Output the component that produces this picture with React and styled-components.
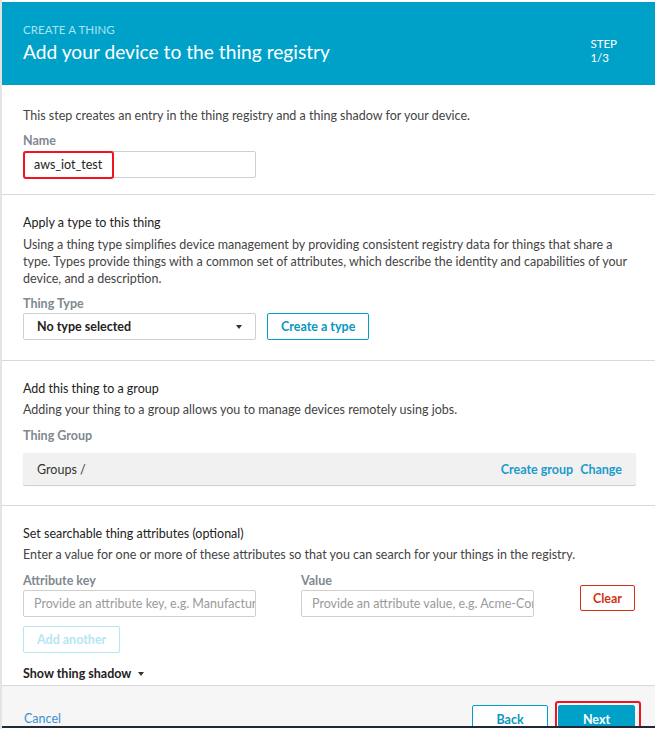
import React from 'react';
import styled, { createGlobalStyle } from 'styled-components';

const GlobalStyle = createGlobalStyle`
  html, body {
    margin: 0;
    padding: 0;
    background: #fff;
  }
  body {
    font-family: 'Lato', 'Liberation Sans', sans-serif;
    color: #333;
  }
`;

const Page = styled.div`
  width: 655px;
  height: 729px;
  overflow: hidden;
  box-sizing: border-box;
  padding-top: 2px;
  border-left: 2px solid #e4e4e4;
  display: flex;
  flex-direction: column;
`;

const Header = styled.div`
  background: #00a1c9;
  height: 83px;
  flex-shrink: 0;
  box-sizing: border-box;
  padding: 21px 21px 0 21px;
  display: flex;
  justify-content: space-between;
`;

const Eyebrow = styled.div`
  font-size: 11.5px;
  color: #a6e4f4;
  letter-spacing: 0.1px;
`;

const Title = styled.h1`
  margin: 4px 0 0;
  font-size: 19.2px;
  font-weight: 400;
  color: #fff;
`;

const Step = styled.div`
  margin: 14px 17px 0 0;
  color: #fff;
  font-size: 11.5px;
  line-height: 14px;
`;

const Section = styled.div`
  flex-shrink: 0;
  padding: ${({ $pad }) => $pad || '21px 21px 16px'};
  border-bottom: 1px solid #d9d9d9;
`;

const Heading = styled.div`
  font-size: 12.5px;
  line-height: 17px;
  color: #222;
`;

const Text = styled.p`
  margin: ${({ $m }) => $m || '4px 0 0'};
  font-size: 12.5px;
  line-height: 17px;
  color: #444;
  max-width: ${({ $w }) => $w || 'none'};
`;

const Label = styled.div`
  margin-top: ${({ $mt }) => $mt || '9px'};
  font-size: 12.5px;
  font-weight: 700;
  color: #808890;
  line-height: 16px;
`;

const Row = styled.div`
  display: flex;
  align-items: ${({ $align }) => $align || 'center'};
  gap: ${({ $gap }) => $gap || '11px'};
  margin-top: ${({ $mt }) => $mt || '4px'};
`;

const FieldWrap = styled.div`
  position: relative;
  width: 233px;
`;

const Input = styled.div`
  box-sizing: border-box;
  width: 233px;
  height: 27px;
  margin-top: ${({ $mt }) => $mt || '0'};
  border: 1px solid #cfcfcf;
  border-radius: 2px;
  padding: 0 10px;
  display: flex;
  align-items: center;
  font-size: 12.5px;
  color: ${({ $placeholder }) => ($placeholder ? '#9a9a9a' : '#222')};
  white-space: nowrap;
  overflow: hidden;
  background: #fff;
`;

const Highlight = styled.div`
  position: absolute;
  left: ${({ $l }) => $l};
  top: ${({ $t }) => $t};
  width: ${({ $w }) => $w};
  height: ${({ $h }) => $h};
  border: 2px solid #f0141e;
  border-radius: 3px;
  box-sizing: border-box;
  pointer-events: none;
`;

const Select = styled(Input)`
  justify-content: space-between;
  padding: 0 13px;
  font-weight: 700;
  color: #222;
`;

const Caret = styled.span`
  width: 0;
  height: 0;
  border-left: 3px solid transparent;
  border-right: 3px solid transparent;
  border-top: 4px solid #333;
`;

const Button = styled.button`
  box-sizing: border-box;
  height: ${({ $h }) => $h || '27px'};
  width: ${({ $w }) => $w || 'auto'};
  padding: 0 ${({ $px }) => $px || '12px'};
  margin-left: ${({ $ml }) => $ml || '0'};
  margin-top: ${({ $mt }) => $mt || '0'};
  background: ${({ $primary }) => ($primary ? '#00a1c9' : '#fff')};
  border: 1px solid ${({ $color }) => $color || '#00a1c9'};
  border-radius: 2px;
  color: ${({ $primary, $text }) => ($primary ? '#fff' : $text || '#0a97c2')};
  font-family: inherit;
  font-size: 12.5px;
  font-weight: 700;
  cursor: pointer;
`;

const GroupBar = styled.div`
  margin-top: 9px;
  height: 32px;
  background: #f1f1f1;
  border-radius: 2px;
  box-shadow: 0 1px 1px rgba(0, 0, 0, 0.2);
  display: flex;
  align-items: center;
  justify-content: space-between;
  padding: 0 14px;
  font-size: 12.5px;
`;

const Links = styled.div`
  display: flex;
  gap: 7px;
`;

const Link = styled.span`
  color: ${({ $color }) => $color || '#1b9bcb'};
  font-weight: ${({ $weight }) => $weight || 700};
  font-size: 12.5px;
  line-height: ${({ $lh }) => $lh || 'normal'};
  margin-top: ${({ $mt }) => $mt || '0'};
`;

const Col = styled.div`
  display: flex;
  flex-direction: column;
  margin-left: ${({ $ml }) => $ml || '0'};
`;

const Toggle = styled.div`
  margin-top: 13px;
  display: flex;
  align-items: center;
  gap: 7px;
  font-size: 12.5px;
  font-weight: 700;
  color: #222;
`;

const Footer = styled.div`
  background: #f6f6f6;
  height: 40px;
  flex-shrink: 0;
  padding: 19px 20px 0 22px;
  box-sizing: border-box;
  display: flex;
  justify-content: space-between;
  align-items: flex-start;
  overflow: hidden;
`;

const FooterButtons = styled.div`
  display: flex;
  gap: 10px;
`;

const NextWrap = styled.div`
  position: relative;
`;

const BottomBar = styled.div`
  height: 2px;
  flex-shrink: 0;
  background: #1f2a36;
`;

export default function App() {
  return (
    <>
      <GlobalStyle />
      <Page>
        <Header>
          <div>
            <Eyebrow>CREATE A THING</Eyebrow>
            <Title>Add your device to the thing registry</Title>
          </div>
          <Step>
            STEP
            <br />
            1/3
          </Step>
        </Header>

        <Section $pad="22px 21px 16px">
          <Text $m="0">This step creates an entry in the thing registry and a thing shadow for your device.</Text>
          <Label $mt="9px">Name</Label>
          <Row $mt="2px">
            <FieldWrap>
              <Input>aws_iot_test</Input>
              <Highlight $l="0" $t="0" $w="91px" $h="28px" />
            </FieldWrap>
          </Row>
        </Section>

        <Section $pad="19px 21px 20px">
          <Heading>Apply a type to this thing</Heading>
          <Text $w="610px" $m="5px 0 0">
            Using a thing type simplifies device management by providing consistent registry data for things that share a
            type. Types provide things with a common set of attributes, which describe the identity and capabilities of your
            device, and a description.
          </Text>
          <Label $mt="9px">Thing Type</Label>
          <Row $mt="1px">
            <Select>
              No type selected
              <Caret />
            </Select>
            <Button $px="13px">Create a type</Button>
          </Row>
        </Section>

        <Section $pad="19px 19px 20px 21px">
          <Heading>Add this thing to a group</Heading>
          <Text>Adding your thing to a group allows you to manage devices remotely using jobs.</Text>
          <Label $mt="10px">Thing Group</Label>
          <GroupBar>
            <span>Groups /</span>
            <Links>
              <Link>Create group</Link>
              <Link>Change</Link>
            </Links>
          </GroupBar>
        </Section>

        <Section $pad="19px 20px 4px 21px">
          <Heading>Set searchable thing attributes (optional)</Heading>
          <Text>Enter a value for one or more of these attributes so that you can search for your things in the registry.</Text>
          <Row $align="flex-start" $gap="0" $mt="10px">
            <Col>
              <Label $mt="0">Attribute key</Label>
              <Input $placeholder $mt="1px">Provide an attribute key, e.g. Manufacturer</Input>
            </Col>
            <Col $ml="45px">
              <Label $mt="0">Value</Label>
              <Input $placeholder $mt="1px">Provide an attribute value, e.g. Acme-Corporation</Input>
            </Col>
            <Button $color="#d13212" $text="#d13212" $px="12px" $h="26px" $ml="auto" $mt="12px">
              Clear
            </Button>
          </Row>
          <Row $mt="9px">
            <Button $color="#b5e6f2" $text="#b5e6f2" $px="13px">Add another</Button>
          </Row>
          <Toggle>
            Show thing shadow
            <Caret />
          </Toggle>
        </Section>

        <Footer>
          <Link $color="#3b8fd1" $weight="400" $lh="13px" $mt="7px">Cancel</Link>
          <FooterButtons>
            <Button $w="76px" $px="0" $h="28px">Back</Button>
            <NextWrap>
              <Button $primary $w="77px" $px="0" $h="28px">Next</Button>
              <Highlight $l="-3px" $t="-4px" $w="86px" $h="34px" />
            </NextWrap>
          </FooterButtons>
        </Footer>
        <BottomBar />
      </Page>
    </>
  );
}
